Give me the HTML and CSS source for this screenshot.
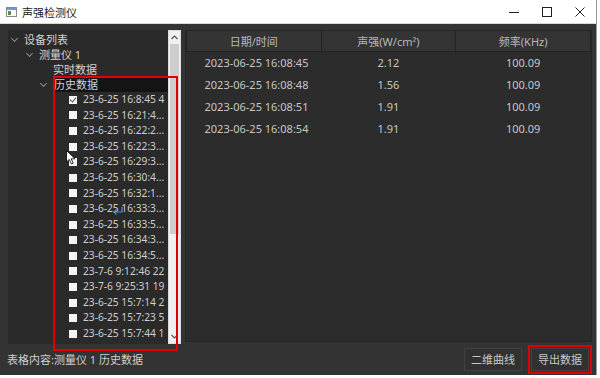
FILE: index.html
```html
<!DOCTYPE html>
<html lang="zh-CN">
<head>
<meta charset="UTF-8">
<title>声强检测仪</title>
<link rel="stylesheet" href="styles.css">
</head>
<body>
<div class="window">
    <div class="titlebar">
        <svg class="app-icon" width="11" height="10" viewBox="0 0 11 10">
            <rect x="0.5" y="0.5" width="10" height="9" fill="#fff" stroke="#8a8a8a"/>
            <rect x="1" y="1" width="9" height="2" fill="#6a9bd8"/>
            <rect x="2" y="4" width="3" height="4" fill="#5b8f3a"/>
        </svg>
        <span class="title">声强检测仪</span>
        <div class="win-buttons">
            <span class="win-btn">
                <svg width="10" height="10" viewBox="0 0 10 10"><path d="M0 5.5h10" stroke="#222" stroke-width="1"/></svg>
            </span>
            <span class="win-btn">
                <svg width="10" height="10" viewBox="0 0 10 10"><rect x="0.5" y="0.5" width="9" height="9" fill="none" stroke="#222"/></svg>
            </span>
            <span class="win-btn">
                <svg width="10" height="10" viewBox="0 0 10 10"><path d="M0.5 0.5l9 9M9.5 0.5l-9 9" stroke="#222" stroke-width="1"/></svg>
            </span>
        </div>
    </div>

    <div class="main">
        <div class="tree">
            <div class="tree-list">
                <div class="node lvl0"><span class="chev"></span>设备列表</div>
                <div class="node lvl1"><span class="chev"></span>测量仪 1</div>
                <div class="node lvl2">实时数据</div>
                <div class="node lvl2b"><span class="chev"></span><span class="sel">历史数据</span></div>
                <div class="item"><span class="box checked"></span>23-6-25 16:8:45 4</div>
                <div class="item"><span class="box"></span>23-6-25 16:21:4...</div>
                <div class="item"><span class="box"></span>23-6-25 16:22:2...</div>
                <div class="item"><span class="box"></span>23-6-25 16:22:3...</div>
                <div class="item"><span class="box"></span>23-6-25 16:29:3...</div>
                <div class="item"><span class="box"></span>23-6-25 16:30:4...</div>
                <div class="item"><span class="box"></span>23-6-25 16:32:1...</div>
                <div class="item"><span class="box"></span>23-6-25 16:33:3...</div>
                <div class="item"><span class="box"></span>23-6-25 16:33:5...</div>
                <div class="item"><span class="box"></span>23-6-25 16:34:3...</div>
                <div class="item"><span class="box"></span>23-6-25 16:34:5...</div>
                <div class="item"><span class="box"></span>23-7-6 9:12:46 22</div>
                <div class="item"><span class="box"></span>23-7-6 9:25:31 19</div>
                <div class="item"><span class="box"></span>23-6-25 15:7:14 2</div>
                <div class="item"><span class="box"></span>23-6-25 15:7:23 5</div>
                <div class="item"><span class="box"></span>23-6-25 15:7:44 1</div>
            </div>
            <div class="scrollbar">
                <div class="arrow up">
                    <svg width="7" height="5" viewBox="0 0 7 5"><path d="M0.5 4L3.5 1L6.5 4" fill="none" stroke="#555" stroke-width="1.2"/></svg>
                </div>
                <div class="track"><div class="thumb"></div></div>
                <div class="arrow down">
                    <svg width="7" height="5" viewBox="0 0 7 5"><path d="M0.5 1L3.5 4L6.5 1" fill="none" stroke="#555" stroke-width="1.2"/></svg>
                </div>
            </div>
            <div class="mark mark-tree"></div>
        </div>

        <div class="table-panel">
            <table class="data">
                <thead>
                    <tr><th>日期/时间</th><th>声强(W/cm²)</th><th>频率(KHz)</th></tr>
                </thead>
                <tbody>
                    <tr><td>2023-06-25 16:08:45</td><td>2.12</td><td>100.09</td></tr>
                    <tr><td>2023-06-25 16:08:48</td><td>1.56</td><td>100.09</td></tr>
                    <tr><td>2023-06-25 16:08:51</td><td>1.91</td><td>100.09</td></tr>
                    <tr><td>2023-06-25 16:08:54</td><td>1.91</td><td>100.09</td></tr>
                </tbody>
            </table>
        </div>
    </div>

    <div class="footer">
        <span class="status">表格内容:测量仪 1 历史数据</span>
        <div class="actions">
            <button class="btn">二维曲线</button>
            <button class="btn export">导出数据</button>
        </div>
    </div>

    <svg class="cursor" width="10" height="15" viewBox="0 0 10 15">
        <path d="M0.5 0.5V12L3.3 9.4L5.4 14L7.2 13.2L5.2 8.8H9Z" fill="#fff" stroke="#000" stroke-width="0.8"/>
    </svg>
    <svg class="cursor-blue" width="12" height="10" viewBox="0 0 12 10">
        <path d="M10 1V6H2M4.5 3.5L2 6L4.5 8.5" fill="none" stroke="#4a8ee0" stroke-width="1.2"/>
    </svg>
</div>
</body>
</html>
```

FILE: styles.css
```css
* {
    box-sizing: border-box;
}
body {
    margin: 0;
    font-family: "Noto Sans", "Noto Sans CJK SC", sans-serif;
    background-color: #ffffff;
}
.window {
    position: relative;
    width: 597px;
    height: 375px;
    background-color: #333333;
    overflow: hidden;
    border-right: 1px solid #9a9a9a;
}
.titlebar {
    height: 24px;
    background-color: #ffffff;
    display: flex;
    align-items: center;
    padding-left: 6px;
    border-bottom: 1px solid #d8d8d8;
}
.app-icon {
    margin-right: 5px;
}
.title {
    font-size: 11px;
    color: #1a1a1a;
}
.win-buttons {
    margin-left: auto;
    display: flex;
    height: 100%;
}
.win-btn {
    width: 33px;
    display: flex;
    align-items: center;
    justify-content: center;
}
.main {
    display: flex;
    gap: 4px;
    height: 320px;
    padding: 6px 4px 0 8px;
}
.tree {
    position: relative;
    width: 173px;
    height: 314px;
    display: flex;
    background-color: #2a2a2a;
}
.tree-list {
    flex: 1;
    padding-top: 2px;
    font-size: 11px;
    color: #d2d2d2;
    overflow: hidden;
    white-space: nowrap;
}
.node {
    height: 15px;
    line-height: 15px;
    display: flex;
    align-items: center;
}
.lvl0 { padding-left: 4px; }
.lvl1 { padding-left: 19px; }
.lvl2 { padding-left: 45px; }
.lvl2b { padding-left: 33px; }
.chev {
    width: 5px;
    height: 5px;
    border-right: 1px solid #8c8c8c;
    border-bottom: 1px solid #8c8c8c;
    transform: rotate(45deg);
    margin: -3px 7px 0 0;
}
.sel {
    flex: 1;
    background-color: #141414;
    padding-left: 1px;
}
.item {
    height: 15.6px;
    line-height: 15.6px;
    padding-left: 61px;
    display: flex;
    align-items: center;
    font-size: 10.2px;
    color: #cfcfcf;
}
.box {
    width: 8px;
    height: 8px;
    background-color: #f4f4f4;
    margin-right: 6px;
    flex: none;
    position: relative;
}
.box.checked::after {
    content: "";
    position: absolute;
    left: 2px;
    top: 0;
    width: 3px;
    height: 5px;
    border-right: 1.3px solid #555;
    border-bottom: 1.3px solid #555;
    transform: rotate(40deg);
}
.scrollbar {
    width: 13px;
    background-color: #f0f0f0;
    display: flex;
    flex-direction: column;
    border: 1px solid #dcdcdc;
}
.arrow {
    height: 13px;
    display: flex;
    align-items: center;
    justify-content: center;
}
.track {
    flex: 1;
}
.thumb {
    margin: 0 1px;
    height: 190px;
    background-color: #cdcdcd;
}
.mark {
    position: absolute;
    border: 2px solid #e00000;
}
.mark-tree {
    left: 45px;
    top: 46px;
    width: 125px;
    height: 275px;
}
.table-panel {
    flex: 1;
    height: 312px;
    background-color: #2c2c2c;
    border: 1px solid #262626;
}
.data {
    width: 100%;
    border-collapse: collapse;
    font-size: 11px;
    color: #c6c6c6;
}
.data th {
    height: 20px;
    font-weight: normal;
    color: #b8b8b8;
    background-color: #343434;
    border: 1px solid #232323;
    border-top: none;
    width: 33.3%;
}
.data td {
    height: 22px;
    text-align: center;
}
.data td:first-child {
    text-align: left;
    padding-left: 18px;
}
.footer {
    display: flex;
    align-items: center;
    height: 30px;
    padding: 0 7px 0 7px;
}
.status {
    font-size: 11px;
    color: #cfcfcf;
}
.actions {
    margin-left: auto;
    display: flex;
    gap: 9px;
}
.btn {
    font-family: "Noto Sans CJK SC", sans-serif;
    font-size: 11px;
    color: #c8c8c8;
    background-color: #313131;
    border: 1px solid #414141;
    width: 58px;
    height: 23px;
    padding: 0;
}
.btn.export {
    outline: 2px solid #e00000;
    outline-offset: 1px;
}
.cursor {
    position: absolute;
    left: 66px;
    top: 150px;
}
.cursor-blue {
    position: absolute;
    left: 112px;
    top: 206px;
}
```
